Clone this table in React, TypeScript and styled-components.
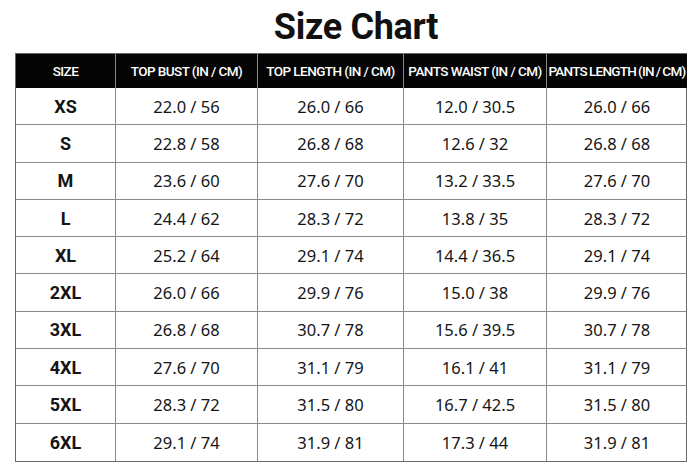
import React from 'react';
import styled, { createGlobalStyle } from 'styled-components';

const GlobalStyle = createGlobalStyle`
    html, body {
        margin: 0;
        padding: 0;
        background: #ffffff;
    }
`;

const Page = styled.div`
    width: 700px;
    height: 467px;
    display: flex;
    flex-direction: column;
    align-items: center;
    padding-top: 6px;
    box-sizing: border-box;
    background: #fff;
`;

const Title = styled.h1`
    margin: 0 0 5px 0;
    font-family: Roboto, 'Liberation Sans', sans-serif;
    font-weight: 700;
    font-size: 36px;
    line-height: 42px;
    color: #111;
    letter-spacing: -0.3px;
    transform: translateX(6px);
`;

const Table = styled.div`
    display: grid;
    grid-template-columns: 100px 142px 146px 143px 140px;
    grid-template-rows: 34px repeat(10, 37.3px);
    width: 672px;
    border: 1px solid #6a6a6a;
    box-sizing: border-box;
    margin-left: 2px;
`;

const HeadCell = styled.div<{ $last?: boolean; $tight?: boolean }>`
    background: #050505;
    color: #fff;
    display: flex;
    align-items: center;
    justify-content: center;
    font-family: Roboto, 'Liberation Sans', sans-serif;
    font-weight: 500;
    font-size: 13.5px;
    letter-spacing: ${(p) => (p.$tight ? '-0.75px' : '-0.55px')};
    word-spacing: ${(p) => (p.$tight ? '-0.6px' : '0')};
    white-space: nowrap;
    border-right: ${(p) => (p.$last ? 'none' : '1px solid #8a8a8a')};
`;

const Cell = styled.div<{ $bold?: boolean; $last?: boolean; $bottom?: boolean }>`
    display: flex;
    align-items: center;
    justify-content: center;
    font-family: ${(p) => (p.$bold ? "Roboto, 'Liberation Sans', sans-serif" : "'Noto Sans', 'Open Sans', sans-serif")};
    font-weight: ${(p) => (p.$bold ? 700 : 400)};
    font-size: ${(p) => (p.$bold ? '18px' : '16.5px')};
    color: #151515;
    border-right: ${(p) => (p.$last ? 'none' : '1px solid #8a8a8a')};
    border-bottom: ${(p) => (p.$bottom ? 'none' : '1px solid #8a8a8a')};
`;

const headers = ['SIZE', 'TOP BUST (IN / CM)', 'TOP LENGTH (IN / CM)', 'PANTS WAIST (IN / CM)', 'PANTS LENGTH (IN / CM)'];

const rows = [
    ['XS', '22.0 / 56', '26.0 / 66', '12.0 / 30.5', '26.0 / 66'],
    ['S', '22.8 / 58', '26.8 / 68', '12.6 / 32', '26.8 / 68'],
    ['M', '23.6 / 60', '27.6 / 70', '13.2 / 33.5', '27.6 / 70'],
    ['L', '24.4 / 62', '28.3 / 72', '13.8 / 35', '28.3 / 72'],
    ['XL', '25.2 / 64', '29.1 / 74', '14.4 / 36.5', '29.1 / 74'],
    ['2XL', '26.0 / 66', '29.9 / 76', '15.0 / 38', '29.9 / 76'],
    ['3XL', '26.8 / 68', '30.7 / 78', '15.6 / 39.5', '30.7 / 78'],
    ['4XL', '27.6 / 70', '31.1 / 79', '16.1 / 41', '31.1 / 79'],
    ['5XL', '28.3 / 72', '31.5 / 80', '16.7 / 42.5', '31.5 / 80'],
    ['6XL', '29.1 / 74', '31.9 / 81', '17.3 / 44', '31.9 / 81'],
];

export default function App() {
    return (
        <Page>
            <GlobalStyle />
            <Title>Size Chart</Title>
            <Table>
                {headers.map((h, i) => (
                    <HeadCell key={h} $last={i === headers.length - 1} $tight={i === headers.length - 1}>
                        {h}
                    </HeadCell>
                ))}
                {rows.map((row, r) =>
                    row.map((value, c) => (
                        <Cell
                            key={`${r}-${c}`}
                            $bold={c === 0}
                            $last={c === row.length - 1}
                            $bottom={r === rows.length - 1}
                        >
                            {value}
                        </Cell>
                    ))
                )}
            </Table>
        </Page>
    );
}
